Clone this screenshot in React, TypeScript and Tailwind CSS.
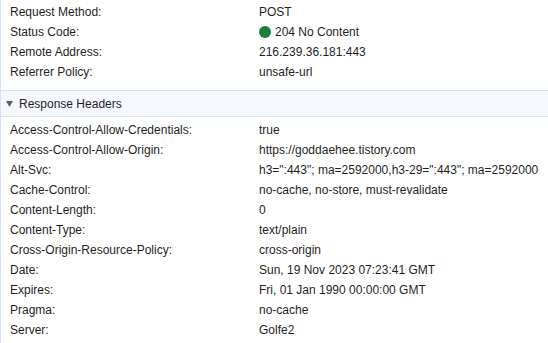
const general: [string, string][] = [
  ["Request Method:", "POST"],
  ["Status Code:", "204 No Content"],
  ["Remote Address:", "216.239.36.181:443"],
  ["Referrer Policy:", "unsafe-url"],
];

const headers: [string, string][] = [
  ["Access-Control-Allow-Credentials:", "true"],
  ["Access-Control-Allow-Origin:", "https://goddaehee.tistory.com"],
  ["Alt-Svc:", 'h3=":443"; ma=2592000,h3-29=":443"; ma=2592000'],
  ["Cache-Control:", "no-cache, no-store, must-revalidate"],
  ["Content-Length:", "0"],
  ["Content-Type:", "text/plain"],
  ["Cross-Origin-Resource-Policy:", "cross-origin"],
  ["Date:", "Sun, 19 Nov 2023 07:23:41 GMT"],
  ["Expires:", "Fri, 01 Jan 1990 00:00:00 GMT"],
  ["Pragma:", "no-cache"],
  ["Server:", "Golfe2"],
];

const Row = ({ name, value }: { name: string; value: string }) => (
  <div className="flex h-[20px] items-center">
    <div className="w-[258px] shrink-0 pl-[9px] whitespace-nowrap">{name}</div>
    <div className="flex items-center gap-[4px] whitespace-nowrap">
      {value === "204 No Content" && (
        <span className="inline-block h-[12px] w-[12px] rounded-full bg-[#188038]" />
      )}
      {value}
    </div>
  </div>
);

export default function App() {
  return (
    <div
      className="h-[343px] w-[548px] overflow-hidden border-l border-[#d3e3fd] bg-white text-[12px] text-[#1f1f1f]"
      style={{ fontFamily: '"Liberation Sans", Arial, sans-serif' }}
    >
      <div className="pt-[2px] pb-[8px]">
        {general.map(([n, v]) => (
          <Row key={n} name={n} value={v} />
        ))}
      </div>
      <div className="flex h-[27px] items-center gap-[6px] border-y border-[#d3e3fd] bg-[#f6f8fd] pl-[5px]">
        <svg width="7" height="6" viewBox="0 0 7 6">
          <path d="M0 0h7L3.5 6z" fill="#5f6368" />
        </svg>
        <span>Response Headers</span>
      </div>
      <div className="pt-[3px]">
        {headers.map(([n, v]) => (
          <Row key={n} name={n} value={v} />
        ))}
      </div>
    </div>
  );
}
